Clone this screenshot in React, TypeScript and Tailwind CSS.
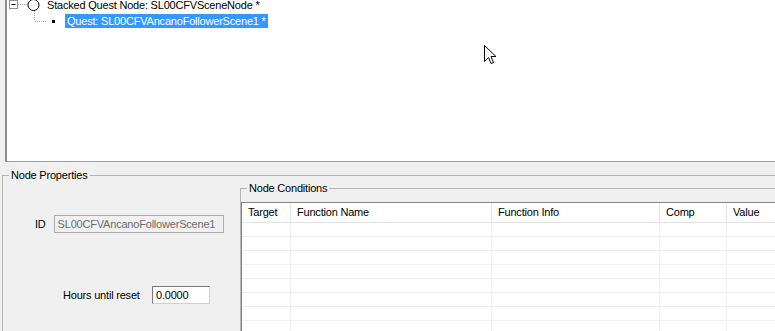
import React from 'react';

const columns = [
  { label: 'Target', width: 'w-[49px]' },
  { label: 'Function Name', width: 'w-[201px]' },
  { label: 'Function Info', width: 'w-[168px]' },
  { label: 'Comp', width: 'w-[67px]' },
  { label: 'Value', width: 'w-[100px]' },
];

const emptyRows = [0, 1, 2, 3, 4, 5, 6, 7];

const Cursor = () => (
  <svg className="absolute left-[484px] top-[45px]" width="13" height="20" viewBox="0 0 13 20">
    <path
      d="M0.5 0.5 L0.5 16.5 L4.5 12.5 L7 18.5 L9.5 17.5 L7 11.5 L12 11.5 Z"
      fill="#fff"
      stroke="#000"
      strokeWidth="1"
      strokeLinejoin="miter"
    />
  </svg>
);

const TreePanel = () => (
  <div className="ml-[5px] h-[162px] bg-white border-l-2 border-b border-l-[#8c8c8c] border-b-[#a0a0a0] overflow-hidden">
    {/* Stacked node row */}
    <div className="flex items-center h-[16px] mt-[-3px]">
      <svg width="40" height="16" viewBox="0 0 40 16" className="shrink-0">
        <rect x="2.5" y="3.5" width="8" height="8" fill="#fff" stroke="#8e8f8f" />
        <line x1="4.5" y1="7.5" x2="8.5" y2="7.5" stroke="#000" />
        <line x1="11" y1="7.5" x2="21" y2="7.5" stroke="#a0a0a0" strokeDasharray="1 1" />
        <circle cx="26.5" cy="8" r="5.5" fill="#fff" stroke="#000" />
        <line x1="27.5" y1="14" x2="27.5" y2="16" stroke="#a0a0a0" strokeDasharray="1 1" />
      </svg>
      <span className="text-black whitespace-nowrap">Stacked Quest Node: SL00CFVSceneNode *</span>
    </div>
    {/* Quest row */}
    <div className="flex items-center h-[16px]">
      <svg width="58" height="16" viewBox="0 0 58 16" className="shrink-0">
        <line x1="27.5" y1="0" x2="27.5" y2="8" stroke="#a0a0a0" strokeDasharray="1 1" />
        <line x1="28" y1="8.5" x2="39" y2="8.5" stroke="#a0a0a0" strokeDasharray="1 1" />
        <rect x="45" y="7" width="3" height="3" fill="#000" />
      </svg>
      <span className="h-[14px] leading-[14px] px-[2px] bg-[#3399ff] text-white whitespace-nowrap">
        Quest: SL00CFVAncanoFollowerScene1 *
      </span>
    </div>
  </div>
);

const ConditionsTable = () => (
  <div className="mt-[7px] bg-white border-l border-t border-[#828282]">
    <div className="flex h-[20px] border-b border-[#e5e5e5]">
      {columns.map((c) => (
        <div
          key={c.label}
          className={`${c.width} shrink-0 border-r border-[#e5e5e5] pl-[6px] leading-[19px] text-black whitespace-nowrap`}
        >
          {c.label}
        </div>
      ))}
    </div>
    {emptyRows.map((r) => (
      <div key={r} className="flex h-[14px] border-b border-[#efefef]">
        {columns.map((c) => (
          <div key={c.label} className={`${c.width} shrink-0 border-r border-[#efefef]`} />
        ))}
      </div>
    ))}
  </div>
);

export default function App() {
  return (
    <div className="relative w-[775px] h-[331px] overflow-hidden bg-[#f0f0f0] font-['Liberation_Sans',Arial,sans-serif] text-[11px] leading-[13px] tracking-[-0.2px] text-black">
      <TreePanel />

      {/* Node Properties group */}
      <fieldset className="ml-[2px] mt-[7px] border-l border-t border-[#b4b4b4] w-[780px] h-[200px] min-w-0">
        <legend className="ml-[6px] px-[2px] leading-[13px]">Node Properties</legend>
        <div className="flex">
          {/* Left column: fields */}
          <div className="w-[237px] shrink-0 flex flex-col">
            <div className="flex items-center mt-[33px] ml-[32px] gap-[8px]">
              <span>ID</span>
              <div className="w-[170px] h-[18px] border border-[#adadad] bg-[#f0f0f0] pl-[3px] leading-[16px] text-[#6d6d6d] whitespace-nowrap overflow-hidden">
                SL00CFVAncanoFollowerScene1
              </div>
            </div>
            <div className="flex items-center mt-[53px] ml-[60px]">
              <span className="w-[89px] whitespace-nowrap">Hours until reset</span>
              <div className="w-[58px] h-[18px] border border-[#7a7a7a] border-r-[#d0d0d0] border-b-[#d0d0d0] bg-white pl-[3px] leading-[16px]">
                0.0000
              </div>
            </div>
          </div>

          {/* Node Conditions group */}
          <fieldset className="flex-1 border-l border-t border-[#b4b4b4] min-w-0 h-[160px]">
            <legend className="ml-[6px] px-[2px] leading-[13px]">Node Conditions</legend>
            <ConditionsTable />
          </fieldset>
        </div>
      </fieldset>

      <Cursor />
    </div>
  );
}
